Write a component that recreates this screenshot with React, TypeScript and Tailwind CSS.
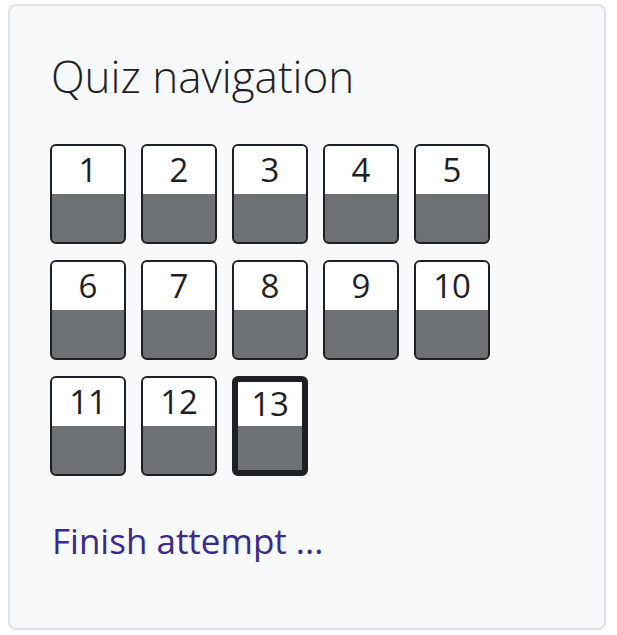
import React from "react"

const questions = Array.from({ length: 13 }, (_, i) => i + 1)
const current = 13

export default function App() {
  return (
    <div className="bg-white min-h-[635px] pt-[4px] pl-[8px] pr-[11px] pb-[5px]" style={{ fontFamily: '"Open Sans", "Noto Sans", sans-serif' }}>
      <section className="h-[626px] rounded-[8px] border-2 border-[#dee2e6] bg-[#f8f9fa] px-[40px] pt-[44px]">
        <h2 className="text-[44px] font-light leading-[1.2] text-[#1d2125] pl-[1px]">Quiz navigation</h2>

        <div className="mt-[41px] grid grid-cols-[repeat(5,76px)] gap-x-[15px] gap-y-[16px]">
          {questions.map((n) => (
            <a
              key={n}
              href="#"
              className={`flex h-[100px] w-[76px] flex-col overflow-hidden rounded-[6px] bg-[#6d7175] ${
                n === current ? "border-[6px] border-[#1d2125]" : "border-2 border-[#1d2125]"
              }`}
            >
              <span
                className={`flex items-center justify-center bg-white text-[#1d2125] text-[33px] leading-none ${
                  n === current ? "h-[44px]" : "h-[48px]"
                }`}
              >
                {n}
              </span>
            </a>
          ))}
        </div>

        <a href="#" className="mt-[44px] block text-[35px] leading-[1.2] text-[#3a2a8a] pl-[2px]">
          Finish attempt ...
        </a>
      </section>
    </div>
  )
}
